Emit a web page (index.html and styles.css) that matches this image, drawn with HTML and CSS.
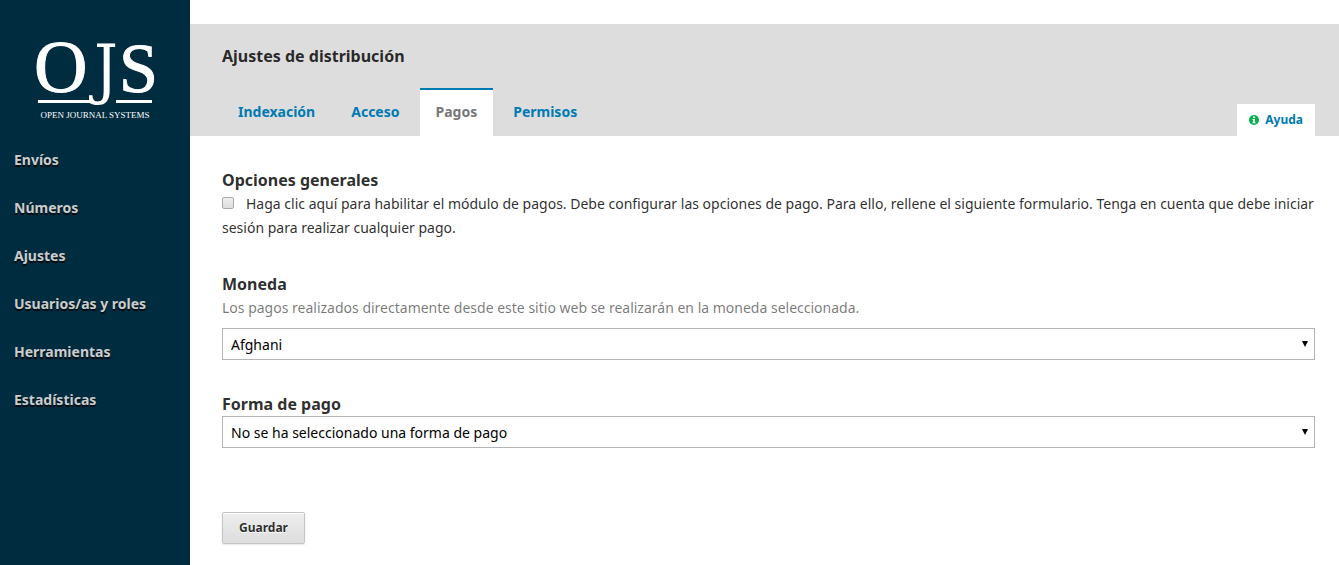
FILE: index.html
```html
<!DOCTYPE html>
<html lang="es">
<head>
<meta charset="utf-8">
<title>Ajustes de distribución</title>
<meta name="viewport" content="width=device-width, initial-scale=1">
<link rel="stylesheet" href="styles.css">
</head>
<body>
<div class="layout">
  <aside class="sidebar">
    <a class="logo" href="#" aria-label="Open Journal Systems">
      <svg class="logo-art" width="118" height="84" viewBox="0 0 118 84">
        <text class="logo-letter" x="-2" y="56">O</text>
        <text class="logo-letter logo-j" x="58" y="55">J</text>
        <text class="logo-letter logo-s" x="83" y="56">S</text>
        <rect x="2" y="64" width="53" height="3"/>
        <rect x="80" y="64" width="36" height="3"/>
        <text class="logo-caption" x="59" y="82">OPEN JOURNAL SYSTEMS</text>
      </svg>
    </a>
    <nav class="menu">
      <a href="#">Envíos</a>
      <a href="#">Números</a>
      <a href="#">Ajustes</a>
      <a href="#">Usuarios/as y roles</a>
      <a href="#">Herramientas</a>
      <a href="#">Estadísticas</a>
    </nav>
  </aside>
  <main class="content">
    <header class="page-header">
      <h1>Ajustes de distribución</h1>
      <div class="tab-row">
        <nav class="tabs">
          <a href="#">Indexación</a>
          <a href="#">Acceso</a>
          <a class="active" href="#" aria-current="page">Pagos</a>
          <a href="#">Permisos</a>
        </nav>
        <a class="help" href="#">
          <svg width="10" height="10" viewBox="0 0 10 10" aria-hidden="true">
            <circle cx="5" cy="5" r="5" fill="#00b24e"/>
            <path d="M4 1.5h2v1.5H4zM3.5 4H6v3.2h.6v1H3.4v-1H4V5h-.5z" fill="#fff"/>
          </svg>
          Ayuda
        </a>
      </div>
    </header>
    <form class="settings">
      <section>
        <h2>Opciones generales</h2>
        <label class="option"><input class="check" type="checkbox">Haga clic aquí para habilitar el módulo de pagos. Debe configurar las opciones de pago. Para ello, rellene el siguiente formulario. Tenga en cuenta que debe iniciar sesión para realizar cualquier pago.</label>
      </section>
      <section>
        <h2><label for="currency">Moneda</label></h2>
        <p class="description">Los pagos realizados directamente desde este sitio web se realizarán en la moneda seleccionada.</p>
        <div class="select-box">
          <select id="currency"><option>Afghani</option></select>
          <svg class="arrow" width="6" height="6" viewBox="0 0 6 6" aria-hidden="true"><path d="M0 0h6L3 6z"/></svg>
        </div>
      </section>
      <section>
        <h2><label for="method">Forma de pago</label></h2>
        <div class="select-box">
          <select id="method"><option>No se ha seleccionado una forma de pago</option></select>
          <svg class="arrow" width="6" height="6" viewBox="0 0 6 6" aria-hidden="true"><path d="M0 0h6L3 6z"/></svg>
        </div>
      </section>
      <button class="save" type="button">Guardar</button>
    </form>
  </main>
</div>
</body>
</html>
```
FILE: styles.css
```css
* { box-sizing: border-box; }
body {
  margin: 0;
  background: #fff;
  color: rgba(0, 0, 0, 0.84);
  font: 14px/24px "Noto Sans", sans-serif;
}
a { color: #007ab2; text-decoration: none; font-weight: 700; }
h1, h2, p { margin: 0; }
h1, h2 { font-size: 16px; line-height: 24px; font-weight: 700; }

.layout { display: flex; min-height: 100vh; }
.sidebar { flex: 0 0 190px; background: #002c40; padding-top: 36px; }
.logo { display: block; padding-left: 36px; }
.logo-art { display: block; fill: #fff; overflow: visible; }
.logo-letter { font: 74px "Liberation Serif", serif; stroke: #fff; stroke-width: 1px; }
.logo-s { font-size: 70px; }
.logo-j { font: 66px "DejaVu Serif Condensed", "DejaVu Serif", serif; stroke: none; }
.logo-caption { font: 9px "Liberation Serif", serif; text-anchor: middle; }
.menu { display: flex; flex-direction: column; padding-top: 16px; }
.menu a {
  padding: 12px 14px;
  color: #ccc;
  text-shadow: 0 2px 1px rgba(0, 0, 0, 0.8);
}

.content { flex: 1; min-width: 0; padding-top: 24px; }
.page-header { background: #ddd; padding: 20px 24px 0 32px; }
.tab-row {
  display: flex;
  justify-content: space-between;
  align-items: flex-end;
  padding-top: 20px;
}
.tabs { display: flex; gap: 4px; }
.tabs a { padding: 10px 16px 12px; border-top: 2px solid transparent; }
.tabs .active { background: #fff; border-color: #007ab2; color: #777; }
.help {
  display: flex;
  align-items: center;
  gap: 6px;
  height: 32px;
  padding: 0 12px;
  background: #fff;
  font-size: 12px;
}

.settings {
  display: flex;
  flex-direction: column;
  align-items: stretch;
  gap: 32px;
  padding: 32px 24px 20px 32px;
}
.option { display: block; }
.check {
  appearance: none;
  width: 12px;
  height: 12px;
  margin: 0 12px 0 0;
  border: 1px solid #aaa;
  border-radius: 2px;
  background: linear-gradient(#eee, #ddd);
}
.check:checked { background: #007ab2; }
.description { color: rgba(0, 0, 0, 0.54); }
.select-box { position: relative; }
.description + .select-box { margin-top: 8px; }
select {
  display: block;
  appearance: none;
  width: 100%;
  height: 32px;
  padding: 2px 24px 0 8px;
  border: 1px solid #b4b4b4;
  border-radius: 0;
  background: #fff;
  color: #000;
  font: inherit;
}
.arrow { position: absolute; right: 7px; top: 13px; pointer-events: none; }
.save {
  align-self: flex-start;
  height: 32px;
  margin-top: 32px;
  padding: 0 16px;
  border: 1px solid #c4c4c4;
  border-radius: 2px;
  background: linear-gradient(#eee, #ddd);
  box-shadow: inset 0 1px 0 #fff, 0 1px 2px rgba(0, 0, 0, 0.1);
  color: rgba(0, 0, 0, 0.84);
  font: 700 12px/30px "Noto Sans", sans-serif;
  text-shadow: 0 1px 0 #fff;
}
```
